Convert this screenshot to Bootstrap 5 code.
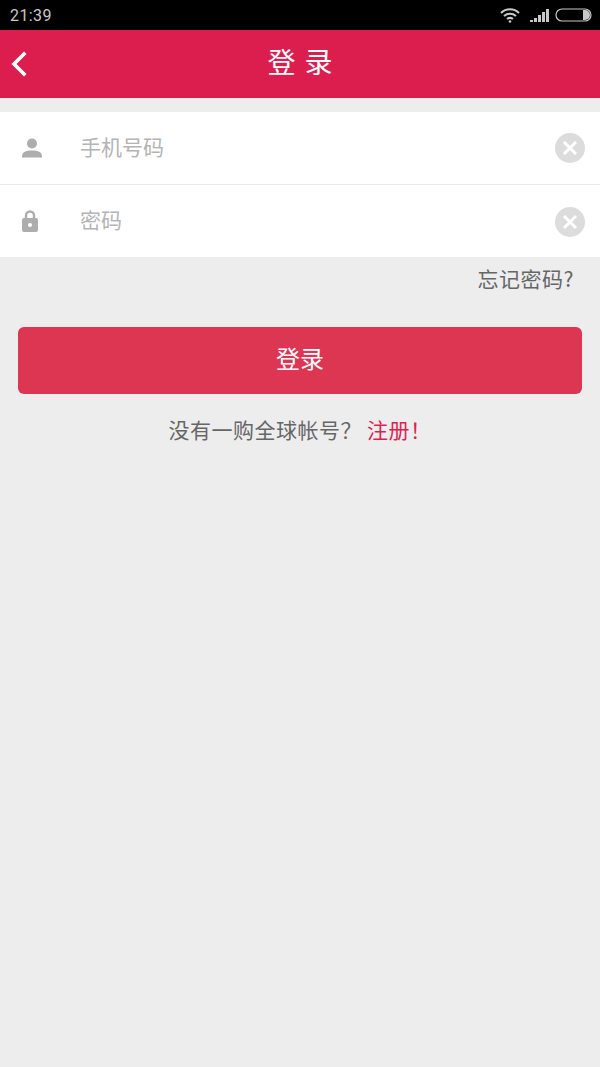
<!DOCTYPE html>
<html lang="zh-CN">
<head>
    <meta charset="UTF-8">
    <meta name="viewport" content="width=device-width, initial-scale=1.0">
    <title>登录</title>
    <link href="https://cdn.jsdelivr.net/npm/bootstrap@5.3.0/dist/css/bootstrap.min.css" rel="stylesheet">
    <style>
        html, body { height: 100%; }
        body {
            background: #ededed;
            font-family: "Noto Sans CJK SC", "Roboto", sans-serif;
            color: #666;
        }
        .status-bar { height: 30px; background: #000; color: #c8c8c8; padding: 0 7px 0 10px; }
        .status-time { font-family: "Roboto", sans-serif; font-size: 16px; line-height: 33px; letter-spacing: .4px; }
        .signal-icon { margin: 0 6px 0 10px; }
        .title-bar { height: 68px; background: #dc1e4f; color: #fff; position: relative; padding-bottom: 6px; }
        .title-text { font-size: 28px; letter-spacing: 9px; margin-right: -9px; line-height: 1; }
        .back-btn { position: absolute; left: 11px; top: 21px; display: block; line-height: 0; }
        .login-fields { margin-top: 14px; background: #fff; }
        .field-row { height: 72px; padding: 0 15px 0 22px; }
        .field-row + .field-row { border-top: 1px solid #e8e8e8; height: 73px; }
        .field-icon { width: 58px; flex: none; line-height: 0; }
        .field-input {
            border: 0; outline: 0; padding: 0 0 2px; background: transparent; min-width: 0;
            font-size: 21px; color: #555; font-family: inherit;
        }
        .field-input::placeholder { color: #b4b4b4; opacity: 1; }
        .clear-btn { width: 30px; height: 30px; border: 0; padding: 0; border-radius: 50%; background: #dcdcdc; line-height: 0; }
        .field-row + .field-row .clear-btn { margin-top: 1px; }
        .forgot { font-size: 21px; color: #666; text-decoration: none; line-height: 42px; padding-right: 26px; height: 46px; letter-spacing: .5px; }
        .login-btn {
            height: 67px; margin: 24px 18px 0; width: calc(100% - 36px); padding: 0 0 6px;
            background: #dd3653; border: 0; border-radius: 6px; color: #fff; font-size: 24px;
        }
        .login-btn:hover, .login-btn:active { background: #dd3653 !important; color: #fff !important; }
        .signup-line { font-size: 21px; margin-top: 17px; line-height: 36px; letter-spacing: .5px; }
        .signup-line a { color: #e01f50; text-decoration: none; margin-left: 5px; }
    </style>
</head>
<body>
<div class="status-bar d-flex justify-content-between align-items-center">
    <span class="status-time">21:39</span>
    <div class="d-flex align-items-center">
        <svg width="20" height="16" viewBox="0 0 20 16" fill="none" stroke="#c8c8c8" stroke-width="2">
            <path d="M1 6c5-5 13-5 18 0"/>
            <path d="M4 9c3.500-3 8.500-3 12 0"/>
            <path d="M7 12c2-1.500 4-1.500 6 0"/>
            <circle cx="10" cy="14.500" r="1.300" fill="#c8c8c8" stroke="none"/>
        </svg>
        <svg class="signal-icon" width="19" height="14" viewBox="0 0 19 14" fill="#c8c8c8">
            <path d="M0 12h3v2H0zM4 10h3v4H4zM8 7h3v7H8zM12 4h3v10h-3zM16 1h3v13h-3z"/>
        </svg>
        <svg width="38" height="14" viewBox="0 0 38 14">
            <rect x="1" y="1" width="35" height="12" rx="6" fill="none" stroke="#c8c8c8" stroke-width="1.200"/>
            <path d="M28 2h2a5 5 0 0 1 0 10h-2z" fill="#c8c8c8"/>
        </svg>
    </div>
</div>

<div class="title-bar d-flex align-items-center justify-content-center">
    <a class="back-btn" href="#" aria-label="返回">
        <svg width="16" height="26" viewBox="0 0 16 26" fill="none" stroke="#fff" stroke-width="3.600" stroke-linecap="square">
            <path d="M13 3 3 13l10 10"/>
        </svg>
    </a>
    <span class="title-text">登录</span>
</div>

<form>
    <div class="login-fields">
        <div class="field-row d-flex align-items-center">
            <span class="field-icon">
                <svg width="20" height="20" viewBox="0 0 20 20" fill="#adadad">
                    <circle cx="10" cy="5.500" r="5"/>
                    <path d="M0 18.500c0-4.500 4-6 10-6s10 1.500 10 6v1H0z"/>
                </svg>
            </span>
            <input class="field-input flex-grow-1" type="text" placeholder="手机号码">
            <button class="clear-btn" type="button" aria-label="清除">
                <svg width="30" height="30" viewBox="0 0 30 30" fill="none" stroke="#fff" stroke-width="3">
                    <path d="M9 9l12 12M21 9 9 21"/>
                </svg>
            </button>
        </div>
        <div class="field-row d-flex align-items-center">
            <span class="field-icon">
                <svg width="16" height="22" viewBox="0 0 16 22">
                    <path d="M4 9V5.500a4 4 0 0 1 8 0V9" fill="none" stroke="#adadad" stroke-width="2.400"/>
                    <rect y="8" width="16" height="14" rx="2" fill="#adadad"/>
                    <circle cx="8" cy="15" r="2" fill="#fff"/>
                </svg>
            </span>
            <input class="field-input flex-grow-1" type="password" placeholder="密码">
            <button class="clear-btn" type="button" aria-label="清除">
                <svg width="30" height="30" viewBox="0 0 30 30" fill="none" stroke="#fff" stroke-width="3">
                    <path d="M9 9l12 12M21 9 9 21"/>
                </svg>
            </button>
        </div>
    </div>
    <div class="d-flex justify-content-end">
        <a class="forgot" href="#">忘记密码?</a>
    </div>
    <button class="btn login-btn d-block" type="button">登录</button>
</form>
<div class="signup-line text-center">没有一购全球帐号？<a href="#">注册！</a></div>

<script src="https://cdn.jsdelivr.net/npm/bootstrap@5.3.0/dist/js/bootstrap.bundle.min.js"></script>
</body>
</html>
